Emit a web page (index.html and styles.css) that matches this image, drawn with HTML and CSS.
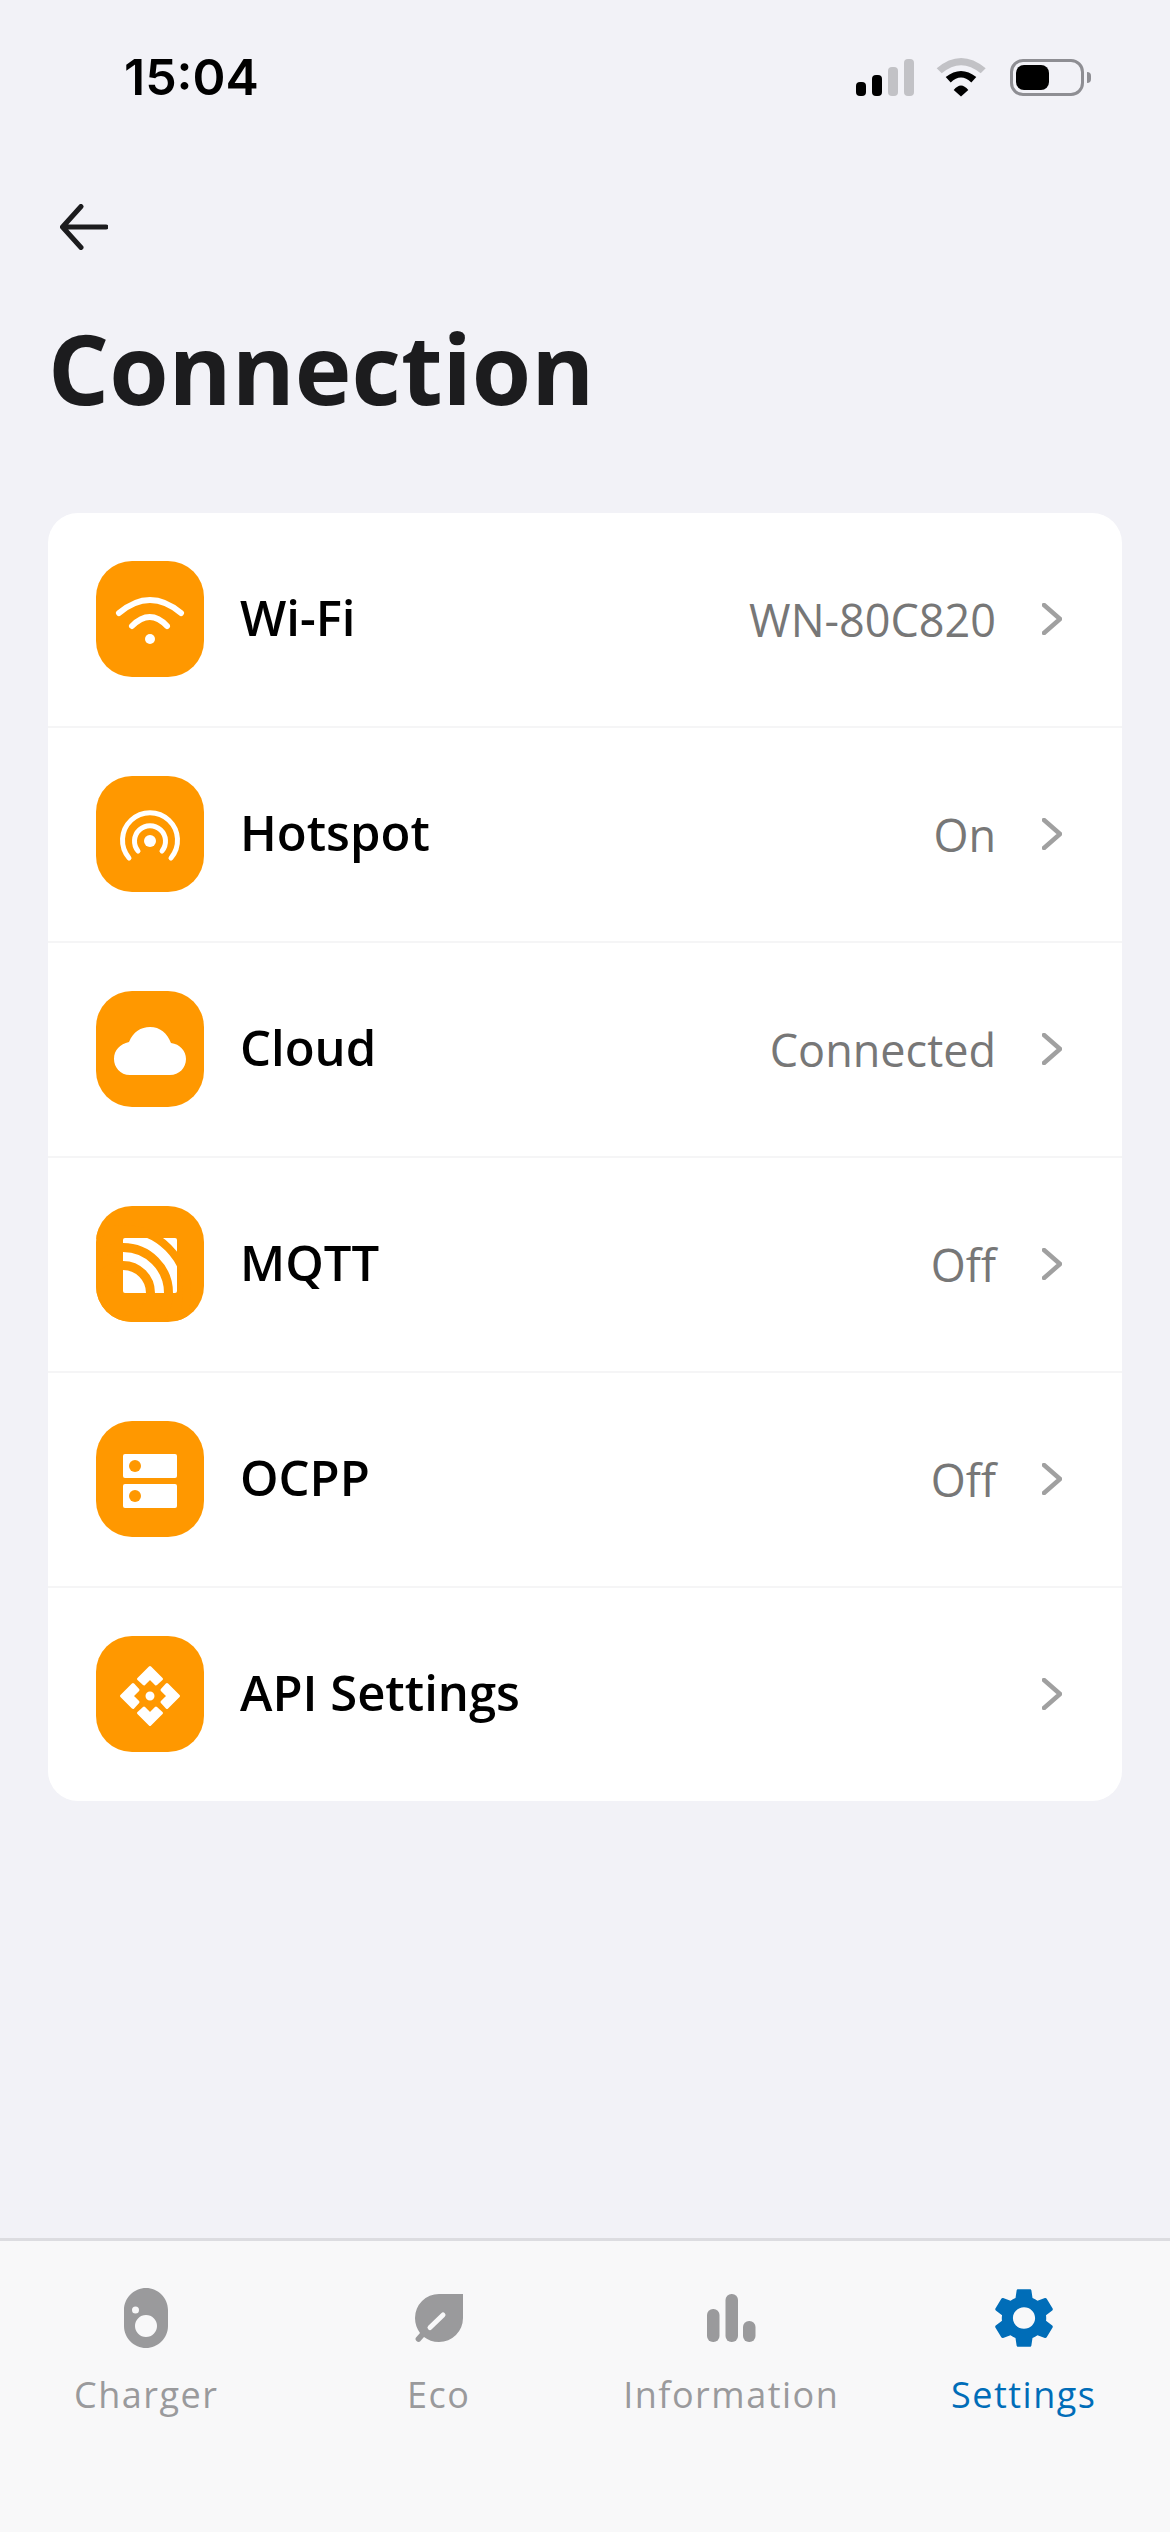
FILE: index.html
```html
<!DOCTYPE html>
<html lang="en">
<head>
    <meta charset="UTF-8">
    <meta name="viewport" content="width=device-width, initial-scale=1.0">
    <title>Connection</title>
    <link rel="stylesheet" href="styles.css">
</head>
<body>
    <div class="page">
        <!-- Status bar -->
        <div class="status-bar">
            <span class="time">15:04</span>
            <div class="status-icons">
                <svg class="signal" viewBox="0 0 58 37">
                    <rect x="0" y="23" width="10" height="14" rx="4" fill="#000"/>
                    <rect x="16" y="16" width="10" height="21" rx="4" fill="#000"/>
                    <rect x="32" y="8" width="10" height="29" rx="4" fill="#c2c2c6"/>
                    <rect x="48" y="0" width="10" height="37" rx="4" fill="#c2c2c6"/>
                </svg>
                <svg class="wifi" viewBox="0 0 50 39">
                    <path d="M0.7 10.3Q25 -10.3 49.7 10.3L44.7 15.3Q25 -1 5.7 15.3Z" fill="#c2c2c6"/>
                    <path d="M9.7 19Q25 7 40.3 19L35.3 24.500Q25 14.6 14.7 24.500Z" fill="#000"/>
                    <path d="M17.7 32Q25 23 32.3 32L25 38.5Z" fill="#000"/>
                </svg>
                <div class="battery">
                    <div class="battery-level"></div>
                </div>
                <div class="battery-tip"></div>
            </div>
        </div>

        <!-- Back button and heading -->
        <div class="back">
            <svg viewBox="0 0 48 46" class="back-icon">
                <path d="M21 2.5L2.5 23L21 43.5M3 23H46" fill="none" stroke="#1c1c1e" stroke-width="5" stroke-linecap="round" stroke-linejoin="round"/>
            </svg>
        </div>
        <h1>Connection</h1>

        <!-- Connection list -->
        <div class="card">
            <div class="row">
                <div class="tile">
                    <svg viewBox="0 0 108 116">
                        <path d="M23 52Q54 26 85 52M36 65Q54 47 71 65" fill="none" stroke="#fff" stroke-width="6" stroke-linecap="round"/>
                        <circle cx="54" cy="78" r="5" fill="#fff"/>
                    </svg>
                </div>
                <span class="row-title">Wi-Fi</span>
                <span class="row-value">WN-80C820</span>
                <svg class="chevron" viewBox="0 0 20 32"><path d="M2 2L18 16L2 30" fill="none" stroke="#a0a0a0" stroke-width="4.500" stroke-linecap="round" stroke-linejoin="round"/></svg>
            </div>
            <div class="row">
                <div class="tile">
                    <svg viewBox="0 0 108 116">
                        <circle cx="54" cy="65" r="6" fill="#fff"/>
                        <path d="M42 75A15.500 15.500 0 1 1 66 75M33 82A27.500 27.500 0 1 1 75 82" fill="none" stroke="#fff" stroke-width="5" stroke-linecap="round"/>
                    </svg>
                </div>
                <span class="row-title">Hotspot</span>
                <span class="row-value">On</span>
                <svg class="chevron" viewBox="0 0 20 32"><path d="M2 2L18 16L2 30" fill="none" stroke="#a0a0a0" stroke-width="4.500" stroke-linecap="round" stroke-linejoin="round"/></svg>
            </div>
            <div class="row">
                <div class="tile">
                    <svg viewBox="0 0 108 116">
                        <path d="M34 84C24 84 18 76 18 68C18 59 24 53 33 51C37 41 45 36 54 36C64 36 71 42 75 52C84 53 90 60 90 68C90 77 83 84 74 84Z" fill="#fff"/>
                    </svg>
                </div>
                <span class="row-title">Cloud</span>
                <span class="row-value">Connected</span>
                <svg class="chevron" viewBox="0 0 20 32"><path d="M2 2L18 16L2 30" fill="none" stroke="#a0a0a0" stroke-width="4.500" stroke-linecap="round" stroke-linejoin="round"/></svg>
            </div>
            <div class="row">
                <div class="tile">
                    <svg viewBox="0 0 108 116">
                        <rect x="27" y="32" width="54" height="55" rx="2" fill="#fff"/>
                        <g fill="none" stroke="#ff9800">
                            <circle cx="27" cy="87" r="27.500" stroke-width="9"/>
                            <circle cx="27" cy="87" r="45.500" stroke-width="9"/>
                            <circle cx="27" cy="87" r="64" stroke-width="8"/>
                        </g>
                    </svg>
                </div>
                <span class="row-title">MQTT</span>
                <span class="row-value">Off</span>
                <svg class="chevron" viewBox="0 0 20 32"><path d="M2 2L18 16L2 30" fill="none" stroke="#a0a0a0" stroke-width="4.500" stroke-linecap="round" stroke-linejoin="round"/></svg>
            </div>
            <div class="row">
                <div class="tile">
                    <svg viewBox="0 0 108 116">
                        <rect x="27" y="33" width="54" height="24" rx="2" fill="#fff"/>
                        <rect x="27" y="63" width="54" height="24" rx="2" fill="#fff"/>
                        <circle cx="39" cy="45" r="6" fill="#ff9800"/>
                        <circle cx="39" cy="75" r="6" fill="#ff9800"/>
                    </svg>
                </div>
                <span class="row-title">OCPP</span>
                <span class="row-value">Off</span>
                <svg class="chevron" viewBox="0 0 20 32"><path d="M2 2L18 16L2 30" fill="none" stroke="#a0a0a0" stroke-width="4.500" stroke-linecap="round" stroke-linejoin="round"/></svg>
            </div>
            <div class="row">
                <div class="tile">
                    <svg viewBox="0 0 108 116">
                        <g transform="translate(54 60)" fill="#fff" stroke="#fff" stroke-width="3" stroke-linejoin="round">
                            <path d="M0 -28.500L11.500 -17L6 -12L0 -18L-6 -12L-11.500 -17Z"/>
                            <path transform="rotate(90)" d="M0 -28.500L11.500 -17L6 -12L0 -18L-6 -12L-11.500 -17Z"/>
                            <path transform="rotate(180)" d="M0 -28.500L11.500 -17L6 -12L0 -18L-6 -12L-11.500 -17Z"/>
                            <path transform="rotate(270)" d="M0 -28.500L11.500 -17L6 -12L0 -18L-6 -12L-11.500 -17Z"/>
                            <circle r="3"/>
                        </g>
                    </svg>
                </div>
                <span class="row-title">API Settings</span>
                <svg class="chevron" viewBox="0 0 20 32"><path d="M2 2L18 16L2 30" fill="none" stroke="#a0a0a0" stroke-width="4.500" stroke-linecap="round" stroke-linejoin="round"/></svg>
            </div>
        </div>

        <!-- Bottom navigation -->
        <nav class="tab-bar">
            <div class="tab">
                <div class="tab-icon">
                    <svg width="44" height="60" viewBox="0 0 44 60">
                        <path fill-rule="evenodd" fill="#9a9a9c" d="M22 0C34 0 44 10 44 22V38C44 50 34 60 22 60C10 60 0 50 0 38V22C0 10 10 0 22 0ZM22 27A11 11 0 1 0 22 49A11 11 0 1 0 22 27ZM11.500 18.500A3.500 3.500 0 1 0 11.500 25.500A3.500 3.500 0 1 0 11.500 18.500Z"/>
                    </svg>
                </div>
                <span class="tab-label">Charger</span>
            </div>
            <div class="tab">
                <div class="tab-icon">
                    <svg width="48" height="48" viewBox="0 0 48 48">
                        <path fill="#9a9a9c" d="M48 0V24A24 24 0 0 1 24 48C18 48 13 46 9 43L5 47.500C3 49 -1 46 1 43.500L5 39C2 35 0 30 0 24A24 24 0 0 1 24 0Z"/>
                        <path d="M28 21L15 33.500" fill="none" stroke="#f8f8f9" stroke-width="5" stroke-linecap="round"/>
                    </svg>
                </div>
                <span class="tab-label">Eco</span>
            </div>
            <div class="tab">
                <div class="tab-icon">
                    <svg width="49" height="48" viewBox="0 0 49 48">
                        <rect x="0" y="15" width="12.500" height="33" rx="6" fill="#9a9a9c"/>
                        <rect x="18.500" y="0" width="12.500" height="48" rx="6" fill="#9a9a9c"/>
                        <rect x="36" y="27" width="12.500" height="21" rx="6" fill="#9a9a9c"/>
                    </svg>
                </div>
                <span class="tab-label">Information</span>
            </div>
            <div class="tab active">
                <div class="tab-icon">
                    <svg width="58" height="60" viewBox="2.6 2 18.8 20" preserveAspectRatio="none">
                        <path fill="#006db8" d="M19.14 12.94c.04-.3.06-.61.06-.94 0-.32-.02-.64-.07-.94l2.03-1.58c.18-.14.23-.41.12-.61l-1.92-3.32c-.12-.22-.37-.29-.59-.22l-2.39.96c-.5-.38-1.03-.7-1.62-.94l-.36-2.54c-.04-.24-.24-.41-.48-.41h-3.84c-.24 0-.43.17-.47.41l-.36 2.54c-.59.24-1.13.57-1.62.94l-2.39-.96c-.22-.08-.47 0-.59.22L2.74 8.87c-.12.21-.08.47.12.61l2.03 1.58c-.05.3-.09.63-.09.94s.02.64.07.94l-2.03 1.58c-.18.14-.23.41-.12.61l1.92 3.32c.12.22.37.29.59.22l2.39-.96c.5.38 1.03.7 1.62.94l.36 2.54c.05.24.24.41.48.41h3.84c.24 0 .44-.17.47-.41l.36-2.54c.59-.24 1.13-.56 1.62-.94l2.39.96c.22.08.47 0 .59-.22l1.92-3.32c.12-.22.07-.47-.12-.61l-2.01-1.58zM12 15.6c-1.98 0-3.6-1.62-3.6-3.6s1.62-3.6 3.6-3.6 3.6 1.62 3.6 3.6-1.62 3.6-3.6 3.6z"/>
                    </svg>
                </div>
                <span class="tab-label">Settings</span>
            </div>
        </nav>
    </div>
</body>
</html>
```

FILE: styles.css
```css
html, body {
    margin: 0;
    padding: 0;
}
body {
    font-family: "Open Sans", "Noto Sans", sans-serif;
    background-color: #f2f2f7;
    color: #000;
}
.page {
    display: flex;
    flex-direction: column;
    height: 2532px;
    overflow: hidden;
}
.status-bar {
    display: flex;
    justify-content: space-between;
    align-items: center;
    height: 37px;
    padding: 59px 79px 0 124px;
}
.time {
    font-family: Inter, sans-serif;
    font-size: 50px;
    font-weight: 600;
    line-height: 37px;
}
.status-icons {
    display: flex;
    align-items: center;
}
.signal {
    width: 58px;
    height: 37px;
    margin-right: 22px;
}
.wifi {
    width: 50px;
    height: 39px;
    margin-right: 24px;
}
.battery {
    box-sizing: border-box;
    width: 74px;
    height: 37px;
    padding: 3px;
    border: 3px solid #8e8e93;
    border-radius: 13px;
}
.battery-level {
    width: 33px;
    height: 25px;
    background-color: #000;
    border-radius: 8px;
}
.battery-tip {
    width: 4px;
    height: 11px;
    margin-left: 3px;
    background-color: #8e8e93;
    border-radius: 0 6px 6px 0;
}
.back {
    padding: 108px 0 0 60px;
    height: 46px;
}
.back-icon {
    display: block;
    width: 48px;
    height: 46px;
}
h1 {
    margin: 53px 0 0;
    padding-left: 48px;
    font-size: 96px;
    font-weight: 700;
    line-height: 130px;
    color: #1c1c1e;
}
.card {
    margin: 80px 48px 0;
    background-color: #fff;
    border-radius: 30px;
}
.row {
    display: flex;
    align-items: center;
    height: 116px;
    padding: 48px 60px 49px 48px;
    border-bottom: 2px solid #f5f5f6;
}
.row:last-child {
    border-bottom: none;
}
.tile {
    flex: none;
    width: 108px;
    height: 116px;
    margin-right: 36px;
    overflow: hidden;
    background-color: #ff9800;
    border-radius: 36px;
}
.tile svg {
    display: block;
    width: 108px;
    height: 116px;
}
.row-title {
    flex: 1;
    font-size: 49px;
    font-weight: 600;
    line-height: 60px;
    margin-top: -4px;
}
.row-value {
    font-size: 45px;
    color: #777;
    line-height: 60px;
    margin-top: 1px;
}
.chevron {
    flex: none;
    width: 20px;
    height: 32px;
    margin-left: 46px;
}
.tab-bar {
    display: grid;
    grid-template-columns: repeat(4, 1fr);
    margin-top: auto;
    height: 291px;
    border-top: 3px solid #dcdce0;
    background-color: #f8f8f9;
}
.tab {
    display: flex;
    flex-direction: column;
    align-items: center;
    padding-top: 47px;
}
.tab-icon {
    display: flex;
    align-items: center;
    justify-content: center;
    height: 60px;
}
.tab-label {
    margin-top: 22px;
    font-size: 36px;
    line-height: 50px;
    letter-spacing: 1.5px;
    color: #9a9a9c;
}
.active .tab-label {
    color: #006db8;
}
```
